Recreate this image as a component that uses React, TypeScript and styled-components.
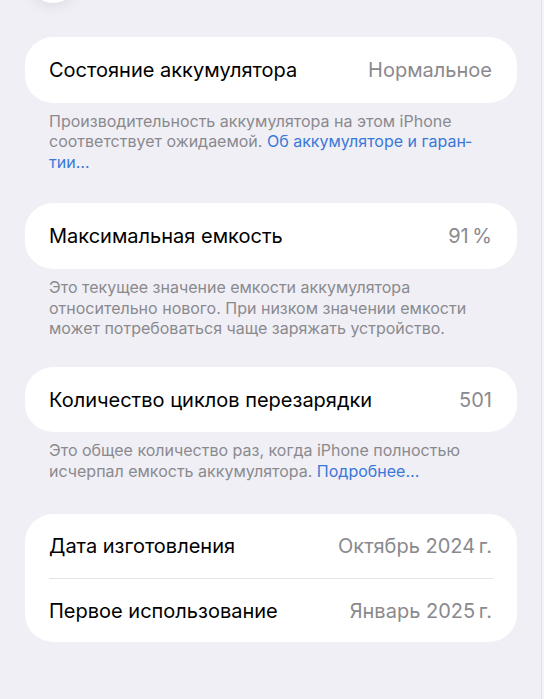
import React from 'react';
import styled, {createGlobalStyle} from 'styled-components';

const GlobalStyle = createGlobalStyle`
	html, body {
		margin: 0;
		padding: 0;
		background: #f4f3f8;
	}

	body {
		font-family: Inter, "Noto Sans", "Liberation Sans", sans-serif;
		-webkit-font-smoothing: antialiased;
	}
`;

const Screen = styled.div`
	position: relative;
	width: 542px;
	height: 699px;
	overflow: hidden;
	box-sizing: border-box;
	padding: 37px 24px 0 25px;
	background: #f0eff5;
	border-right: 1px solid #e2e1e7;
`;

const BackButton = styled.div`
	position: absolute;
	top: -45px;
	left: 29px;
	width: 48px;
	height: 48px;
	border-radius: 50%;
	background: #fff;
	box-shadow: 0 3px 14px rgba(0, 0, 0, 0.08);
`;

const Section = styled.section`
	margin-bottom: ${({$gap}: {$gap: number}) => $gap}px;
`;

const Card = styled.div`
	background: #fff;
	border-radius: 28px;
	overflow: hidden;
`;

const Row = styled.div`
	display: flex;
	align-items: center;
	justify-content: space-between;
	height: ${({$height}: {$height: number}) => $height}px;
	padding: 0 25px 0 24px;
`;

const Divider = styled.div`
	height: 1px;
	margin: 0 24px;
	background: #e3e3e8;
`;

const Label = styled.span`
	font-size: 20px;
	color: #000;
`;

const Value = styled.span`
	font-size: 20px;
	color: #8a8a8e;
`;

const Footer = styled.p`
	margin: 0;
	padding: 8px 24px 0 24px;
	font-size: 16px;
	line-height: 20.4px;
	color: #8a8a8e;
	hyphens: manual;
`;

const Link = styled.a`
	color: #3a78d8;
	text-decoration: none;
`;

const App = (): JSX.Element => (
	<>
		<GlobalStyle/>
		<Screen>
			<BackButton/>
			<Section $gap={31}>
				<Card>
					<Row $height={66}>
						<Label>Состояние аккумулятора</Label>
						<Value>Нормальное</Value>
					</Row>
				</Card>
				<Footer>
					Производительность аккумулятора на этом iPhone соответствует ожидаемой.{' '}
					<Link>Об аккумуляторе и гаран{'\u00AD'}тии…</Link>
				</Footer>
			</Section>
			<Section $gap={29}>
				<Card>
					<Row $height={66}>
						<Label>Максимальная емкость</Label>
						<Value>91{'\u2009'}%</Value>
					</Row>
				</Card>
				<Footer>
					Это текущее значение емкости аккумулятора относительно нового. При низком значении емкости может потребоваться чаще заряжать устройство.
				</Footer>
			</Section>
			<Section $gap={33}>
				<Card>
					<Row $height={65}>
						<Label>Количество циклов перезарядки</Label>
						<Value>501</Value>
					</Row>
				</Card>
				<Footer>
					Это общее количество раз, когда iPhone полностью исчерпал емкость аккумулятора.{' '}
					<Link>Подробнее…</Link>
				</Footer>
			</Section>
			<Section $gap={0}>
				<Card>
					<Row $height={64}>
						<Label>Дата изготовления</Label>
						<Value>Октябрь 2024{'\u202F'}г.</Value>
					</Row>
					<Divider/>
					<Row $height={63}>
						<Label>Первое использование</Label>
						<Value>Январь 2025{'\u202F'}г.</Value>
					</Row>
				</Card>
			</Section>
		</Screen>
	</>
);

export default App;
